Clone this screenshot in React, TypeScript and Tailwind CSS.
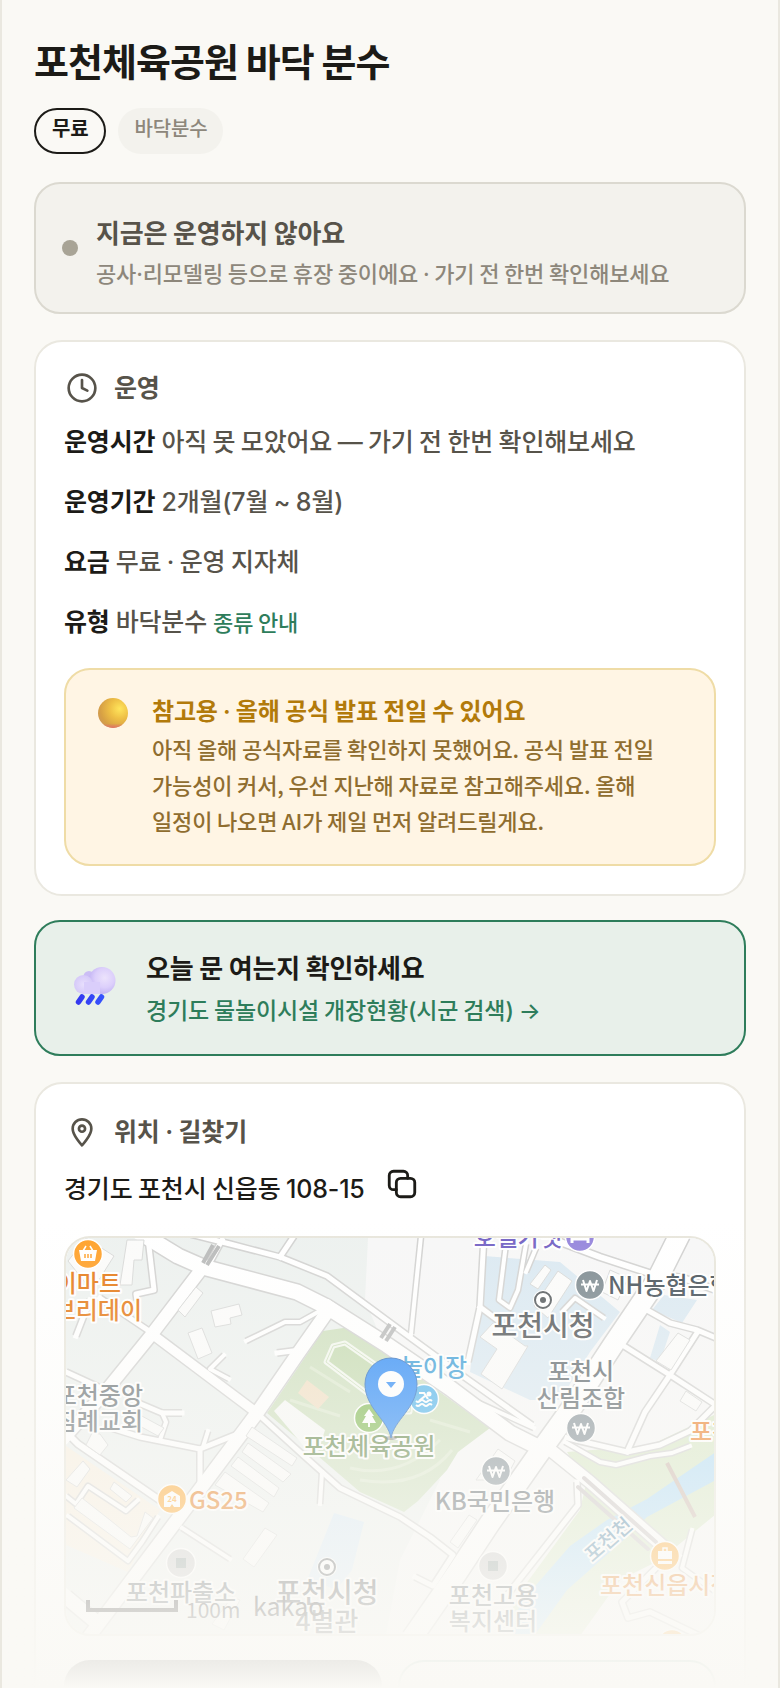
import type { ReactNode } from "react";
import { Clock } from "lucide-react";

const infoRows = [
  { label: "운영시간", value: "아직 못 모았어요 — 가기 전 한번 확인해보세요" },
  { label: "운영기간", value: "2개월(7월 ~ 8월)" },
  { label: "요금", value: "무료 · 운영 지자체" },
  { label: "유형", value: "바닥분수", link: "종류 안내" },
];

// Streets are drawn twice: grey casing first, white surface on top
const roads = [
  { d: "M190 1234 L230 1244 L280 1257 L327 1276 L400 1330 L463 1376 L532 1425", w: 5 },
  { d: "M280 1257 L294 1236", w: 5 },
  { d: "M222 1240 L208 1266", w: 5 },
  { d: "M148 1238 L154 1290 L136 1294 L137 1300", w: 5 },
  { d: "M421 1236 L411 1334", w: 4 },
  { d: "M484 1236 L480 1307 L468 1362", w: 5 },
  { d: "M480 1307 L500 1322", w: 5 },
  { d: "M506 1244 L499 1300 L510 1308 L518 1290 L526 1244", w: 4 },
  { d: "M526 1272 L536 1248", w: 4 },
  { d: "M555 1240 L600 1257 L652 1274 L683 1278 L716 1290", w: 6 },
  { d: "M604 1318 L575 1298 L562 1312", w: 4 },
  { d: "M647 1310 L670 1323 L697 1330 L716 1338", w: 5 },
  { d: "M697 1333 L670 1375 L645 1412 L627 1452", w: 5 },
  { d: "M624 1346 L670 1375 L716 1405 L690 1431 L660 1445 L627 1452 L567 1438", w: 5 },
  { d: "M565 1442 L600 1462 L616 1465 L650 1456 L672 1453 L690 1446", w: 4 },
  { d: "M100 1298 L152 1333", w: 5 },
  { d: "M66 1372 L105 1390", w: 5 },
  { d: "M90 1300 L76 1336", w: 5 },
  { d: "M327 1307 L300 1322 L285 1322 L246 1341", w: 4 },
  { d: "M277 1353 L300 1350", w: 5 },
  { d: "M224 1355 L210 1369 L229 1379", w: 4 },
  { d: "M136 1402 L162 1413 L182 1413", w: 5 },
  { d: "M162 1413 L166 1422 L160 1440", w: 4 },
  { d: "M66 1432 L78 1444 L164 1503", w: 6 },
  { d: "M105 1426 L140 1437 L200 1449 L240 1433", w: 5 },
  { d: "M200 1449 L200 1490", w: 5 },
  { d: "M208 1431 L203 1447", w: 4 },
  { d: "M66 1496 L76 1504 L88 1486 L126 1511 L138 1500", w: 4 },
  { d: "M68 1516 L128 1561 L142 1542 L158 1517", w: 4 },
  { d: "M182 1528 L230 1559", w: 4 },
  { d: "M66 1597 L96 1622", w: 14 },
  { d: "M257 1413 L303 1455 L340 1488 L400 1517 L430 1537 L453 1555 L433 1586 L415 1577", w: 5 },
  { d: "M322 1472 L320 1504", w: 4 },
  { d: "M457 1393 L534 1428", w: 4 },
  { d: "M577 1482 L578 1505 L508 1594", w: 5 },
  { d: "M692 1530 L682 1568 L716 1592", w: 4 },
  { d: "M656 1568 L622 1602 L628 1618 L650 1612 L700 1636", w: 5 },
  { d: "M203 1267 L152 1334 L105 1392 L66 1436", w: 12 },
  { d: "M152 1334 L257 1413", w: 9 },
  { d: "M330 1308 L297 1355 L257 1413 L177 1520 L88 1638", w: 13 },
  { d: "M142 1234 L178 1256 L203 1267 L297 1292 L327 1307 L387 1345 L450 1388 L510 1433 L540 1448", w: 15 },
  { d: "M680 1234 L657 1280 L613 1345 L573 1406 L537 1456 L490 1523 L457 1573 L412 1638", w: 20 },
  { d: "M548 1448 L590 1482 L674 1556", w: 12 },
];

const buildings = [
  "M68 1261 L86 1238 L114 1256 L92 1291Z",
  "M127 1240 L144 1240 L142 1260 L134 1260 L132 1285 L120 1285Z",
  "M196 1287 L203 1293 L185 1317 L178 1310Z",
  "M211 1311 L239 1304 L242 1315 L230 1318 L231 1324 L215 1327Z",
  "M188 1333 L202 1328 L212 1353 L198 1359Z",
  "M92 1433 L100 1434 L108 1445 L100 1455 L86 1445Z",
  "M83 1461 L90 1469 L77 1487 L66 1480Z",
  "M114 1482 L132 1496 L126 1502 L110 1489Z",
  "M82 1498 L110 1520 L131 1537 L137 1536 L145 1512 L153 1518 L130 1549 L74 1508Z",
  "M252 1427 L297 1458 L292 1466 L246 1436Z",
  "M248 1443 L291 1474 L283 1482 L242 1452Z",
  "M238 1457 L279 1488 L274 1497 L231 1466Z",
  "M225 1472 L269 1503 L263 1512 L215 1485Z",
  "M140 1415 L164 1428 L158 1436 L136 1424Z",
  "M265 1528 L277 1535 L254 1567 L243 1559Z",
  "M545 1265 L551 1270 L538 1289 L530 1284Z",
  "M558 1271 L572 1281 L548 1318 L534 1306Z",
  "M493 1323 L525 1346 L528 1346 L502 1389 L481 1374 L497 1349 L480 1337Z",
  "M610 1270 L628 1278 L618 1300 L602 1292Z",
  "M678 1333 L690 1340 L671 1370 L656 1361Z",
  "M686 1391 L702 1402 L696 1411 L680 1401Z",
  "M498 1449 L515 1461 L505 1480 L476 1480Z",
  "M469 1515 L477 1520 L458 1548 L450 1542Z",
  "M232 1597 L240 1600 L224 1630 L212 1624Z",
];

// Sets digits and punctuation in Inter, everything else stays in the Korean face
function Mixed({ text }: { text: string }) {
  return text.split(/([\d\-()~—·→]+)/).map((part, i) =>
    i % 2 ? (
      <span key={i} className="font-[Inter,sans-serif] leading-none">
        {part}
      </span>
    ) : (
      part
    ),
  );
}

function MapLabel({
  x,
  y,
  size = 24,
  fill,
  anchor = "middle",
  rotate,
  children,
}: {
  x: number;
  y: number;
  size?: number;
  fill: string;
  anchor?: "start" | "middle" | "end";
  rotate?: number;
  children: ReactNode;
}) {
  return (
    <text
      x={x}
      y={y}
      fontSize={size}
      fill={fill}
      textAnchor={anchor}
      fontWeight={500}
      stroke="#fff"
      strokeWidth={4}
      strokeLinejoin="round"
      paintOrder="stroke"
      transform={rotate ? `rotate(${rotate} ${x} ${y})` : undefined}
    >
      {children}
    </text>
  );
}

function Spot({ x, y, fill, children }: { x: number; y: number; fill: string; children?: ReactNode }) {
  return (
    <g transform={`translate(${x} ${y})`}>
      <circle r={14.5} fill={fill} stroke="#fff" strokeWidth={1.5} />
      {children}
    </g>
  );
}

function Won() {
  return (
    <path
      d="M-7 -5 L-3.5 6 L0 -4 L3.5 6 L7 -5 M-9 -0.5 H9"
      fill="none"
      stroke="#fff"
      strokeWidth={2}
      strokeLinejoin="round"
    />
  );
}

function Office({ x, y }: { x: number; y: number }) {
  return (
    <g>
      <circle cx={x} cy={y} r={10} fill="#fff" />
      <circle cx={x} cy={y} r={8} fill="#fff" stroke="#565b5e" strokeWidth={2} />
      <circle cx={x} cy={y} r={3} fill="#565b5e" />
    </g>
  );
}

function ParkMap() {
  return (
    <svg
      viewBox="66 1238 648 396"
      preserveAspectRatio="xMidYMid slice"
      className="block h-full w-full font-['Noto_Sans_CJK_KR',sans-serif] tracking-normal"
      role="img"
      aria-label="포천체육공원 지도"
    >
      <rect x="66" y="1238" width="648" height="400" fill="#edf1ef" />
      <path d="M368 1238 L714 1238 L714 1640 L385 1640 L400 1560 L440 1480 L365 1300Z" fill="#f7f7f7" />
      <path d="M484 1256 L560 1262 L620 1312 L590 1352 L560 1400 L530 1400 L470 1372Z" fill="#dbe9f2" />
      <path d="M664 1295 L697 1300 L682 1323 L652 1310Z M660 1325 L670 1332 L660 1362 L650 1358Z" fill="#dbe9f2" />
      <path d="M66 1446 L160 1510 L128 1572 L66 1545Z" fill="#f8efe0" />
      <path d="M334 1513 L364 1522 L352 1570 L336 1590 L308 1578Z" fill="#d8e9f6" />

      {/* park */}
      <path
        d="M323 1331 L350 1327 L384 1352 L490 1428 L458 1452 L447 1470 L418 1501 L404 1512 L360 1492 L318 1456 L267 1413Z"
        fill="#cfe0bf"
      />
      <path
        d="M345 1343 L333 1346 L326 1362 L392 1412 L410 1412 L412 1390Z"
        fill="#c6dbb2"
        stroke="#f4f8ef"
        strokeWidth={5}
        strokeLinejoin="round"
      />
      <path
        d="M345 1343 L333 1346 L326 1362 L392 1412 L410 1412 L412 1390Z"
        fill="none"
        stroke="#cfe0bf"
        strokeWidth={1}
        strokeLinejoin="round"
      />
      <path
        d="M310 1367 L350 1392 M290 1400 L340 1416 M350 1468 Q400 1480 440 1440 M360 1480 Q420 1490 452 1450 M430 1420 L470 1432"
        fill="none"
        stroke="#dde9cf"
        strokeWidth={3}
      />
      <path d="M307 1380 L329 1397 L318 1409 L298 1393Z" fill="#f1dfc4" />
      <path d="M285 1400 L325 1430 L318 1452 L312 1456 L274 1411Z" fill="#f7f8f6" />

      {/* stream and banks */}
      <path d="M567 1452 L716 1440 L716 1514 L660 1560 L620 1580 L580 1636 L500 1636 L520 1592 L580 1510 L586 1484Z" fill="#d9e8c8" />
      <path d="M640 1450 L716 1414 L716 1450Z" fill="#d9e8c8" />
      <path d="M716 1452 L716 1480 L647 1517 L627 1537 L567 1590 L534 1636 L500 1636 L530 1592 L570 1546 L607 1520 L647 1499Z" fill="#b3ddf7" />
      <path d="M667 1463 L695 1517" stroke="#cdb9ae" strokeWidth={4} />

      <g fill="none" stroke="#d2d2d1" strokeLinejoin="round">
        {roads.map((r) => (
          <path key={r.d} d={r.d} strokeWidth={r.w + 3} />
        ))}
      </g>
      <g fill="none" stroke="#fff" strokeLinejoin="round" strokeLinecap="square">
        {roads.map((r) => (
          <path key={r.d} d={r.d} strokeWidth={r.w} />
        ))}
      </g>
      <g fill="#fbfbfa" stroke="#d8d9d8" strokeWidth={1}>
        {buildings.map((d) => (
          <path key={d} d={d} />
        ))}
      </g>
      <path d="M213 1245 L203 1263 M219 1246 L207 1265 M390 1324 L381 1338 M395 1327 L386 1341" stroke="#b9baba" strokeWidth={4} />
      <path d="M584 1478 L656 1542 M578 1487 L648 1549" stroke="#cbc5c5" strokeWidth={4} strokeLinecap="round" />

      <MapLabel x={121} y={1292} fill="#e57a17" anchor="end">이마트</MapLabel>
      <MapLabel x={142} y={1319} fill="#e57a17" anchor="end">에브리데이</MapLabel>
      <MapLabel x={143} y={1404} fill="#6c7478" anchor="end">포천중앙</MapLabel>
      <MapLabel x={143} y={1430} fill="#6c7478" anchor="end">침례교회</MapLabel>
      <MapLabel x={562} y={1246} fill="#7463c4" anchor="end">호텔가넷</MapLabel>
      <MapLabel x={608} y={1294} fill="#47525a" anchor="start">NH농협은행</MapLabel>
      <MapLabel x={543} y={1336} size={28} fill="#54585b">포천시청</MapLabel>
      <MapLabel x={581} y={1380} fill="#626b70">포천시</MapLabel>
      <MapLabel x={581} y={1407} fill="#626b70">산림조합</MapLabel>
      <MapLabel x={690} y={1440} fill="#ec812b" anchor="start">포천축협</MapLabel>
      <MapLabel x={467} y={1376} fill="#3f9fd8" anchor="end">놀이장</MapLabel>
      <MapLabel x={369} y={1455} fill="#64884c">포천체육공원</MapLabel>
      <MapLabel x={189} y={1509} fill="#e57a17" anchor="start">GS25</MapLabel>
      <MapLabel x={495} y={1510} fill="#626b70">KB국민은행</MapLabel>
      <MapLabel x={181} y={1601} fill="#50595e">포천파출소</MapLabel>
      <MapLabel x={327} y={1603} size={28} fill="#44484b">포천시청</MapLabel>
      <MapLabel x={327} y={1631} size={26} fill="#44484b">4별관</MapLabel>
      <MapLabel x={493} y={1604} fill="#50595e">포천고용</MapLabel>
      <MapLabel x={493} y={1630} fill="#50595e">복지센터</MapLabel>
      <MapLabel x={613} y={1545} size={20} fill="#4c84a6" rotate={-41}>포천천</MapLabel>
      <MapLabel x={600} y={1594} fill="#e57a17" anchor="start">포천신읍시장</MapLabel>

      <Spot x={88} y={1254} fill="#ffa12a">
        <path d="M-9 -4 H9 L7 7 H-7Z" fill="#fff" />
        <path d="M-5 -3 L-2 -8 M5 -3 L2 -8" stroke="#fff" strokeWidth={1.5} />
        <path d="M-3 0 V4 M0 0 V4 M3 0 V4" stroke="#ffa12a" strokeWidth={1.5} />
      </Spot>
      <Spot x={580} y={1237} fill="#9686dc">
        <path d="M-8 -4 V6 M-8 2 H8 V6" stroke="#fff" strokeWidth={3} fill="none" />
      </Spot>
      <Spot x={590} y={1285} fill="#7f8c92"><Won /></Spot>
      <Spot x={581} y={1428} fill="#87939a"><Won /></Spot>
      <Spot x={496} y={1471} fill="#87939a"><Won /></Spot>
      <Spot x={369} y={1418} fill="#84bb58">
        <path d="M0 -9 L5 -2 H3 L7 5 H1 V9 H-1 V5 H-7 L-3 -2 H-5Z" fill="#fff" />
      </Spot>
      <Spot x={424} y={1399} fill="#55b6ec">
        <circle cx={5} cy={-5} r={2.5} fill="#fff" />
        <path d="M-5 -6 L0 -6 L4 0 M-5 2 L1 -3" stroke="#fff" strokeWidth={2.2} fill="none" />
        <path d="M-8 2 q2 2 4 0 t4 0 t4 0 t4 0 M-8 6 q2 2 4 0 t4 0 t4 0 t4 0" stroke="#fff" strokeWidth={1.8} fill="none" />
      </Spot>
      <Spot x={172} y={1499} fill="#ffa72c">
        <path d="M-8 8 V-3 L0 -8 L8 -3 V8 H2 L0 5 L-2 8Z" fill="#fff" />
        <text y={3} fontSize={8} fontWeight={700} textAnchor="middle" fill="#ffa72c">24</text>
      </Spot>
      <Spot x={181} y={1563} fill="#c9c9c9"><rect x={-5} y={-5} width={10} height={10} fill="#8b9a98" /></Spot>
      <Spot x={493} y={1566} fill="#c9c9c9"><rect x={-5} y={-5} width={10} height={10} fill="#8b9a98" /></Spot>
      <Spot x={665} y={1556} fill="#ffa72c">
        <path d="M-7 -5 H7 V3 H-7Z M-7 5 H7 V8 H-7Z" fill="#fff" />
        <path d="M-2 -5 V-8 H2 V-5" stroke="#fff" strokeWidth={1.5} fill="none" />
      </Spot>
      <Spot x={672} y={1644} fill="#ffa72c" />
      <Office x={543} y={1300} />
      <Office x={327} y={1567} />

      {/* scale and provider */}
      <path d="M88 1600 V1610 H176 V1600" fill="none" stroke="#222" strokeWidth={4} />
      <text x={186} y={1618} fontSize={21} fontWeight={400} fill="#333">100m</text>
      <text x={253} y={1616} fontSize={25} fontWeight={400} fill="#222">kakao</text>

      <ellipse cx={391} cy={1438} rx={6} ry={2} fill="#555" opacity={0.5} />
      <path
        d="M391 1438 C388 1420 365 1408 365 1384 A26 26 0 0 1 417 1384 C417 1408 394 1420 391 1438Z"
        fill="#2f8cf7"
        stroke="#2a6cc0"
        strokeWidth={1}
      />
      <circle cx={391} cy={1384} r={13} fill="#fff" />
      <path d="M386 1382 H396 L391 1388Z" fill="#2f8cf7" />
    </svg>
  );
}

function CoinIcon() {
  return (
    <svg viewBox="0 0 30 30" className="mt-2 size-[30px] shrink-0" aria-hidden="true">
      <defs>
        <radialGradient id="coin" cx="0.72" cy="0.36" r="0.75">
          <stop offset="0" stopColor="#ffe55c" />
          <stop offset="0.45" stopColor="#eebf45" />
          <stop offset="0.85" stopColor="#d7a044" />
          <stop offset="1" stopColor="#d09a50" />
        </radialGradient>
        <linearGradient id="coinEdge" x1="0" y1="0" x2="0" y2="1">
          <stop offset="0.85" stopColor="#e2706a" stopOpacity="0" />
          <stop offset="1" stopColor="#e2706a" />
        </linearGradient>
      </defs>
      <circle cx="15" cy="15" r="15" fill="url(#coin)" />
      <circle cx="15" cy="15" r="15" fill="url(#coinEdge)" />
    </svg>
  );
}

function RainIcon() {
  return (
    <svg viewBox="0 0 42 38" className="mb-1 h-[38px] w-[42px] shrink-0" aria-hidden="true">
      <defs>
        <radialGradient id="cloudBig" cx="0.6" cy="0.4" r="0.6">
          <stop offset="0" stopColor="#ece3fc" />
          <stop offset="0.6" stopColor="#dccffb" />
          <stop offset="1" stopColor="#c3b4f4" />
        </radialGradient>
        <radialGradient id="cloudSmall" cx="0.5" cy="0.5" r="0.8">
          <stop offset="0" stopColor="#e8dffd" />
          <stop offset="1" stopColor="#cabcf6" />
        </radialGradient>
        <linearGradient id="rain" x1="0" y1="0" x2="42" y2="0" gradientUnits="userSpaceOnUse">
          <stop offset="0" stopColor="#3434ee" />
          <stop offset="0.8" stopColor="#3658ff" />
        </linearGradient>
      </defs>
      <circle cx="15" cy="9.500" r="5.500" fill="#cbbdf5" />
      <circle cx="28" cy="13.500" r="13.500" fill="url(#cloudBig)" />
      <circle cx="9.500" cy="17.500" r="9.500" fill="url(#cloudSmall)" />
      <path d="M10 15 H26 V27 H10Z" fill="#dacefb" />
      <g stroke="url(#rain)" strokeWidth="5.500" strokeLinecap="round">
        <path d="M8 30 L4.500 35" />
        <path d="M18 30 L14.500 35" />
        <path d="M27.500 30 L24 35" />
      </g>
    </svg>
  );
}

function PinIcon() {
  return (
    <svg viewBox="0 0 24 24" className="size-8" fill="none" stroke="currentColor" strokeWidth={2} aria-hidden="true">
      <path d="M12 22C12 22 19 14.500 19 9.500a7 7 0 1 0-14 0C5 14.500 12 22 12 22Z" strokeLinejoin="round" />
      <circle cx="12" cy="9.500" r="2.300" />
    </svg>
  );
}

function CopyIcon() {
  return (
    <svg
      viewBox="0 0 24 24"
      className="size-[34px]"
      fill="none"
      stroke="currentColor"
      strokeWidth={2}
      strokeLinecap="round"
      aria-hidden="true"
    >
      <rect x="8" y="8" width="13" height="13" rx="3" />
      <path d="M8 16H6a3 3 0 0 1-3-3V6a3 3 0 0 1 3-3h7a3 3 0 0 1 3 3v2" />
    </svg>
  );
}

export default function App() {
  return (
    <main className="relative h-screen overflow-hidden border-x-2 border-[#eae8e0] bg-[#faf9f5] px-8 pt-8 font-['Noto_Sans_CJK_KR',sans-serif] font-medium tracking-[-0.01em] text-[#1c1b17]">
      <h1 className="text-[38px] leading-14 font-bold tracking-tight">포천체육공원 바닥 분수</h1>

      <div className="mt-5 flex gap-3 text-[20px] leading-7">
        <span className="h-[46px] rounded-full border-2 border-[#1c1b17] px-4 pt-1 font-semibold">무료</span>
        <span className="h-[46px] rounded-full bg-[#f3f2ed] px-4 pt-[6px] text-[#8d877b]">바닥분수</span>
      </div>

      <section className="mt-7 flex items-center gap-[18px] rounded-[26px] border-2 border-[#dbd9d0] bg-[#f3f2ed] p-[26px]">
        <span className="size-4 shrink-0 rounded-full bg-[#a8a496]" />
        <div className="flex flex-col gap-1">
          <h2 className="text-[26px] leading-11 font-semibold text-[#57534a]">지금은 운영하지 않아요</h2>
          <p className="text-[22px] leading-7 text-[#8d877b]">
            <Mixed text="공사·리모델링 등으로 휴장 중이에요 · 가기 전 한번 확인해보세요" />
          </p>
        </div>
      </section>

      <section className="mt-[26px] rounded-[28px] border-2 border-[#eae8e0] bg-white p-7">
        <h2 className="flex h-9 items-center gap-4 pl-[2px] text-[25px] font-semibold text-[#57534a]">
          <Clock className="size-8" strokeWidth={2} />
          <span className="pb-[3px]">운영</span>
        </h2>
        <dl className="mt-[14px] flex flex-col gap-5 text-[25px] leading-10 text-[#57534a]">
          {infoRows.map((row) => (
            <div key={row.label} className="flex items-baseline gap-[6px]">
              <dt className="font-bold text-[#1c1b17]">{row.label}</dt>
              <dd>
                <Mixed text={row.value} />
                {row.link && (
                  <a href="#types" className="ml-[6px] text-[22px] leading-none text-[#2e7d5b]">
                    {row.link}
                  </a>
                )}
              </dd>
            </div>
          ))}
        </dl>
        <div className="mt-7 flex gap-6 rounded-[26px] border-2 border-[#efdca6] bg-[#fff5e4] px-8 pt-5 pb-[26px]">
          <CoinIcon />
          <div>
            <h3 className="text-[24px] leading-10 font-semibold text-[#b27a0a]">
              <Mixed text="참고용 · 올해 공식 발표 전일 수 있어요" />
            </h3>
            <p className="text-[22px] leading-9 break-keep text-[#8f6d2f]">
              아직 올해 공식자료를 확인하지 못했어요. 공식 발표 전일 가능성이 커서, 우선 지난해 자료로 참고해주세요. 올해 일정이 나오면 AI가 제일 먼저 알려드릴게요.
            </p>
          </div>
        </div>
      </section>

      <a href="#status" className="mt-6 flex items-center gap-[30px] rounded-[26px] border-2 border-[#2e7d5b] bg-[#e8f0ea] px-[38px] py-[25px]">
        <RainIcon />
        <span className="flex flex-col gap-[2px]">
          <strong className="text-[26px] leading-10 font-semibold">오늘 문 여는지 확인하세요</strong>
          <span className="text-[23px] leading-10 text-[#2e7d5b]">
            <Mixed text="경기도 물놀이시설 개장현황(시군 검색) →" />
          </span>
        </span>
      </a>

      <section className="mt-[26px] rounded-[28px] border-2 border-[#eae8e0] bg-white p-7">
        <h2 className="flex h-10 items-center gap-4 pl-[2px] text-[25px] font-semibold text-[#57534a]">
          <PinIcon />
          <span className="pb-[3px]">
            <Mixed text="위치 · 길찾기" />
          </span>
        </h2>
        <div className="mt-4 flex h-10 items-center gap-5 text-[25px]">
          <p>
            <Mixed text="경기도 포천시 신읍동 108-15" />
          </p>
          <button type="button" aria-label="주소 복사" className="pb-2">
            <CopyIcon />
          </button>
        </div>
        <div className="mt-7 h-[400px] overflow-hidden rounded-[26px] border-2 border-[#e8e6dc]">
          <ParkMap />
        </div>
        <div className="mt-6 grid grid-cols-2 gap-4">
          <button type="button" aria-label="길찾기" className="h-24 rounded-[26px] bg-[#1c1b17]" />
          <button type="button" aria-label="지도에서 보기" className="h-24 rounded-[26px] border-2 border-[#2e7d5b]/60 bg-white" />
        </div>
      </section>

      <div className="pointer-events-none absolute inset-x-0 bottom-0 h-[468px] bg-linear-to-b from-[#faf9f5]/0 to-[#faf9f5]" />
    </main>
  );
}
